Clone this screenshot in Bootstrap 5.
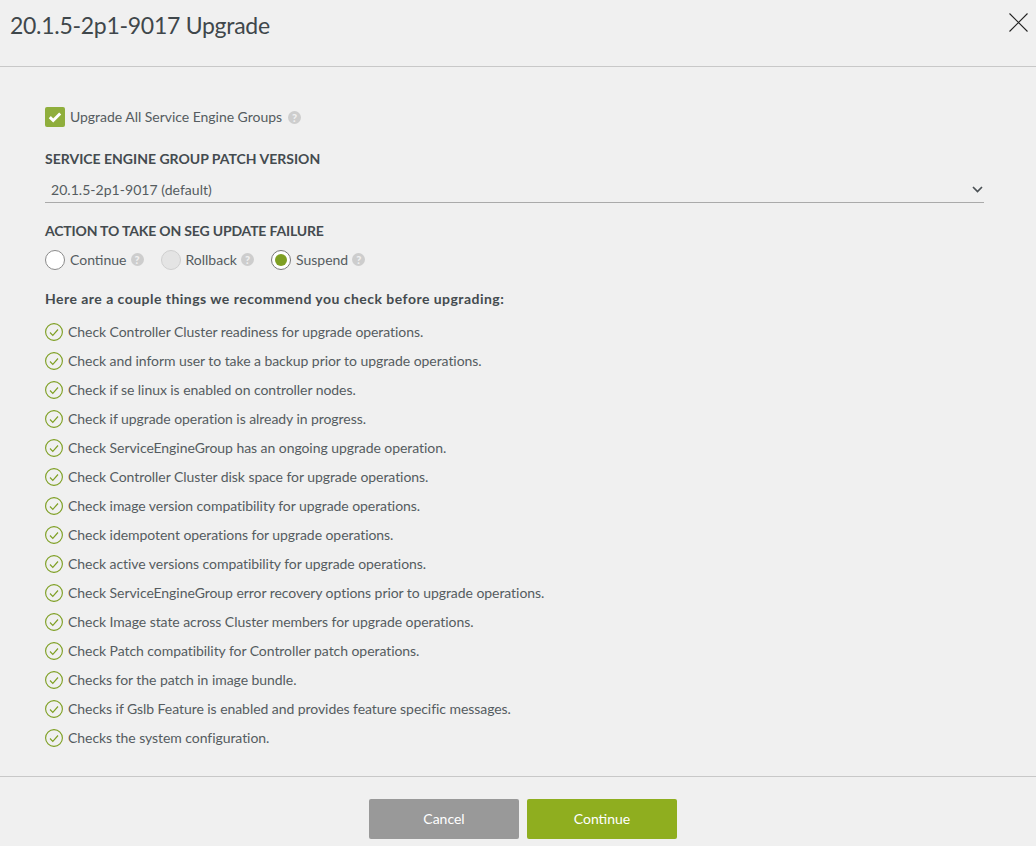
<!DOCTYPE html>
<html lang="en">
<head>
<meta charset="utf-8">
<title>Upgrade</title>
<link href="https://cdn.jsdelivr.net/npm/bootstrap@5.3.0/dist/css/bootstrap.min.css" rel="stylesheet">
<style>
html,body{height:100%}
body{background:#f0f0f0;color:#555c60;font-family:"Lato","Open Sans",sans-serif;font-size:14px;overflow:hidden}
.dlg-head{height:67px;border-bottom:1px solid #c8c8c8;padding:9px 10px 0}
.dlg-title{font-size:23px;line-height:32px;font-weight:400;color:#3f474b;margin:0;letter-spacing:-.28px}
.dlg-close{top:13px;right:8px;width:19px;height:19px;background:none;border:0;padding:0;line-height:0}
.dlg-body{height:709px;padding:40px 52px 0 45px}
.dlg-foot{height:70px;border-top:1px solid #c8c8c8;padding:22px 0 0 10px;gap:8px}
.chk-row{height:20px;letter-spacing:-.03px}
.chk-box{width:20px;height:20px;border-radius:2px;background:#8fae3c;flex:none;margin-right:5px}
.chk-txt{padding-bottom:2px}
.hlp{width:13px;height:13px;border-radius:50%;background:#cdcdcd;color:#f0f0f0;font-size:11px;line-height:13px;font-weight:900;text-align:center;flex:none;margin-left:6px}
.fld-label{font-size:14px;font-weight:700;line-height:18px;color:#444b4f;margin:0}
.fld-first{margin-top:23px}
.fld-second{margin-top:19px;letter-spacing:-.17px}
.sel-box{height:27px;margin-top:8px;border-bottom:1px solid #aaa;padding:0 1px 0 6px;letter-spacing:.04px}
.rad-row{margin-top:9px;gap:18px}
.rad{width:20px;height:20px;border-radius:50%;border:1px solid #8a8a8a;background:#fff;flex:none;margin-right:5px}
.rad-off{background:#e4e4e4;border-color:#cfcfcf}
.rad-on{border-color:#777}
.rad-on i{width:12px;height:12px;border-radius:50%;background:#7e9f23;display:block}
.rad-row .hlp{margin-left:4px}
.rad-row .rad-lead{margin-right:-1px}
.hint{font-size:14px;font-weight:700;line-height:18px;color:#444b4f;margin:20px 0 0;letter-spacing:.47px}
.chk-list{margin:9px 0 0;padding:0;list-style:none}
.chk-list li{height:29px;gap:5px;letter-spacing:-.06px}
.chk-list svg{width:18px;height:18px;flex:none;fill:none;stroke:#7e9f23;stroke-width:1.150}
.btn-dlg{width:150px;height:40px;border-radius:2px;border:0;color:#fff;font-size:14px;padding:0 0 2px}
.btn-cancel{background:#999}
.btn-go{background:#8fae1f}
</style>
</head>
<body>
<svg width="0" height="0" class="d-block position-absolute" aria-hidden="true"><symbol id="okmark" viewBox="0 0 18 18"><circle cx="9" cy="9" r="8.400"/><path d="M5 9.500l2.800 2.800L13 6.500"/></symbol></svg>
<header class="dlg-head position-relative">
  <h1 class="dlg-title">20.1.5-2p1-9017 Upgrade</h1>
  <button class="dlg-close position-absolute" aria-label="Close" type="button"><svg width="19" height="19" viewBox="0 0 19 19"><path d="M.5.5l18 18M18.500.5l-18 18" stroke="#222" stroke-width="1.100" fill="none"/></svg></button>
</header>
<main class="dlg-body">
  <div class="chk-row d-flex align-items-center">
    <span class="chk-box d-flex align-items-center justify-content-center"><svg width="14" height="12" viewBox="0 0 14 12"><path d="M1.800 6.200l3.400 3.300 7-7" stroke="#fff" stroke-width="3" fill="none"/></svg></span>
    <span class="chk-txt">Upgrade All Service Engine Groups</span><span class="hlp">?</span>
  </div>
  <p class="fld-label fld-first">SERVICE ENGINE GROUP PATCH VERSION</p>
  <div class="sel-box d-flex align-items-center justify-content-between">
    <span>20.1.5-2p1-9017 (default)</span>
    <svg width="11" height="7" viewBox="0 0 11 7"><path d="M1 1l4.500 4.500L10 1" stroke="#4a5054" stroke-width="1.700" fill="none"/></svg>
  </div>
  <p class="fld-label fld-second">ACTION TO TAKE ON SEG UPDATE FAILURE</p>
  <div class="rad-row d-flex align-items-center">
    <div class="rad-lead d-flex align-items-center"><span class="rad"></span><span>Continue</span><span class="hlp">?</span></div>
    <div class="rad-lead d-flex align-items-center"><span class="rad rad-off"></span><span>Rollback</span><span class="hlp">?</span></div>
    <div class="d-flex align-items-center"><span class="rad rad-on d-flex align-items-center justify-content-center"><i></i></span><span>Suspend</span><span class="hlp">?</span></div>
  </div>
  <p class="hint">Here are a couple things we recommend you check before upgrading:</p>
  <ul class="chk-list">
    <li class="d-flex align-items-center"><svg><use href="#okmark"/></svg><span>Check Controller Cluster readiness for upgrade operations.</span></li>
    <li class="d-flex align-items-center"><svg><use href="#okmark"/></svg><span>Check and inform user to take a backup prior to upgrade operations.</span></li>
    <li class="d-flex align-items-center"><svg><use href="#okmark"/></svg><span>Check if se linux is enabled on controller nodes.</span></li>
    <li class="d-flex align-items-center"><svg><use href="#okmark"/></svg><span>Check if upgrade operation is already in progress.</span></li>
    <li class="d-flex align-items-center"><svg><use href="#okmark"/></svg><span>Check ServiceEngineGroup has an ongoing upgrade operation.</span></li>
    <li class="d-flex align-items-center"><svg><use href="#okmark"/></svg><span>Check Controller Cluster disk space for upgrade operations.</span></li>
    <li class="d-flex align-items-center"><svg><use href="#okmark"/></svg><span>Check image version compatibility for upgrade operations.</span></li>
    <li class="d-flex align-items-center"><svg><use href="#okmark"/></svg><span>Check idempotent operations for upgrade operations.</span></li>
    <li class="d-flex align-items-center"><svg><use href="#okmark"/></svg><span>Check active versions compatibility for upgrade operations.</span></li>
    <li class="d-flex align-items-center"><svg><use href="#okmark"/></svg><span>Check ServiceEngineGroup error recovery options prior to upgrade operations.</span></li>
    <li class="d-flex align-items-center"><svg><use href="#okmark"/></svg><span>Check Image state across Cluster members for upgrade operations.</span></li>
    <li class="d-flex align-items-center"><svg><use href="#okmark"/></svg><span>Check Patch compatibility for Controller patch operations.</span></li>
    <li class="d-flex align-items-center"><svg><use href="#okmark"/></svg><span>Checks for the patch in image bundle.</span></li>
    <li class="d-flex align-items-center"><svg><use href="#okmark"/></svg><span>Checks if Gslb Feature is enabled and provides feature specific messages.</span></li>
    <li class="d-flex align-items-center"><svg><use href="#okmark"/></svg><span>Checks the system configuration.</span></li>
  </ul>
</main>
<footer class="dlg-foot d-flex justify-content-center align-items-start">
  <button class="btn btn-dlg btn-cancel" type="button">Cancel</button>
  <button class="btn btn-dlg btn-go" type="button">Continue</button>
</footer>
</body>
</html>
